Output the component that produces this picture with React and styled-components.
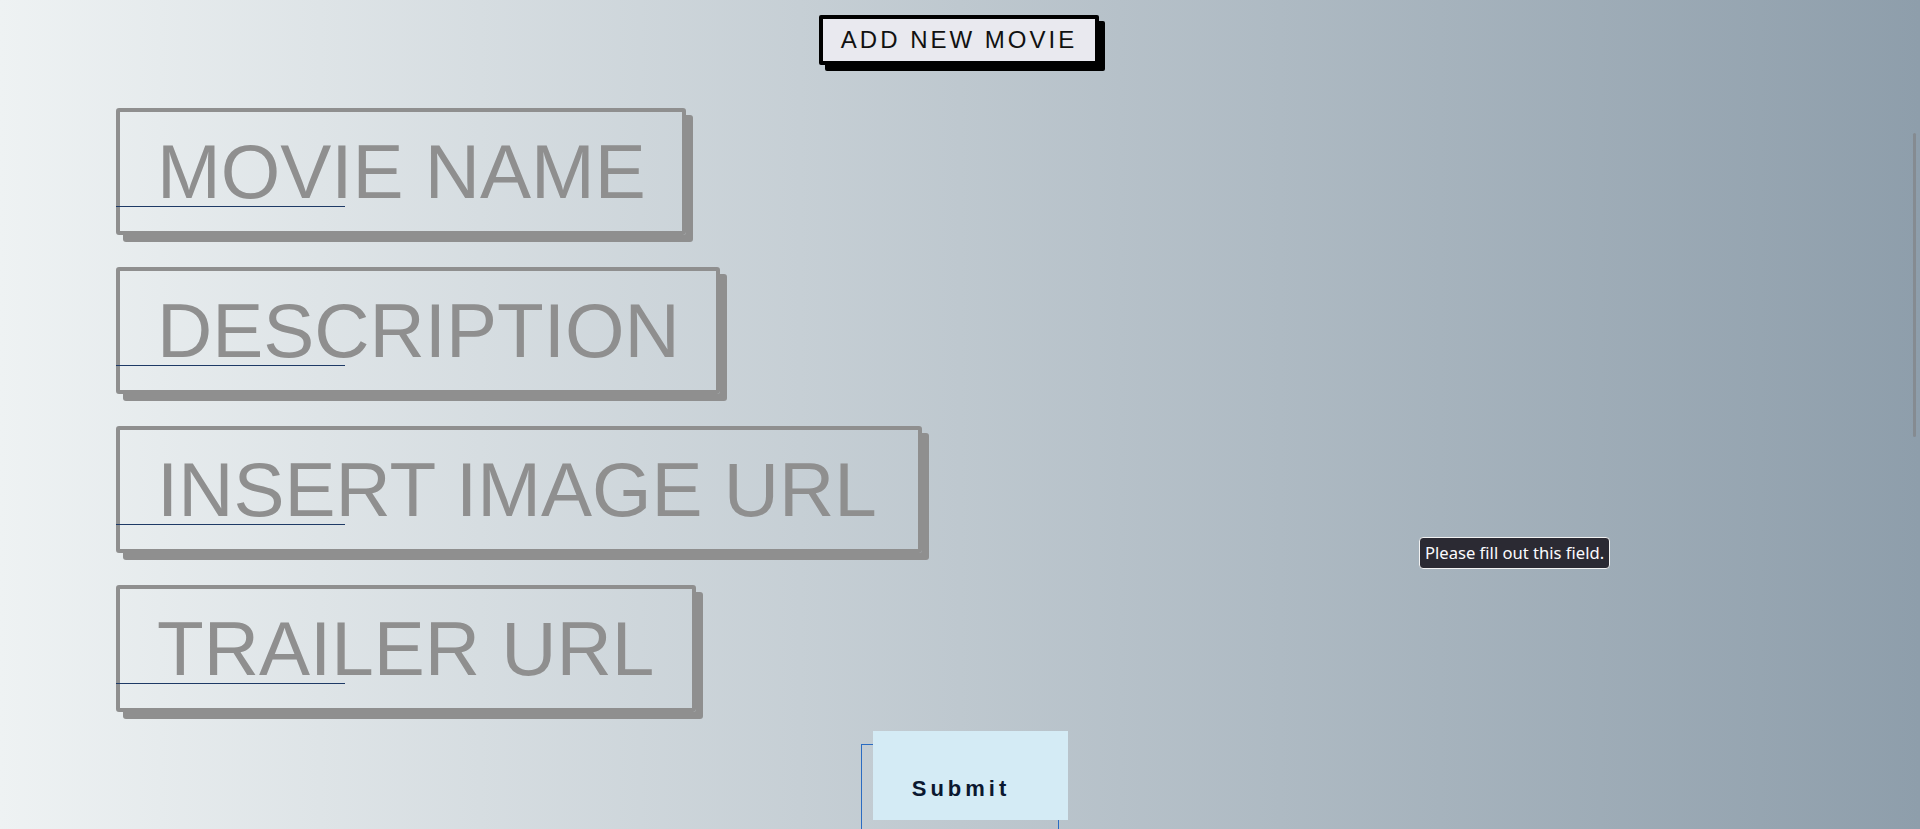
import React from "react";
import styled, { createGlobalStyle } from "styled-components";

const fields = [
  { name: "name", placeholder: "MOVIE NAME", width: 570 },
  { name: "description", placeholder: "DESCRIPTION", width: 604 },
  { name: "image", placeholder: "INSERT IMAGE URL", width: 806 },
  { name: "trailer", placeholder: "TRAILER URL", width: 580 },
];

export default function App() {
  const submitHandler = (e) => {
    e.preventDefault();
  };

  return (
    <>
      <GlobalStyle />
      <PageDiv>
        <HeaderBox>
          <TitleH1>ADD NEW MOVIE</TitleH1>
        </HeaderBox>
        <MovieForm onSubmit={submitHandler}>
          {fields.map((f) => (
            <FieldBox key={f.name}>
              <MovieInput name={f.name} placeholder={f.placeholder} $w={f.width} required />
              <FocusLine />
            </FieldBox>
          ))}
          <SubmitButton type='submit'>Submit</SubmitButton>
        </MovieForm>
        <ValidationTip>Please fill out this field.</ValidationTip>
        <ScrollThumb />
      </PageDiv>
    </>
  );
}

const GlobalStyle = createGlobalStyle`
  html, body {
    margin: 0;
    padding: 0;
  }
  body {
    background: linear-gradient(to right, #eef2f3, #8e9eab);
    font-family: "Liberation Sans", Arial, sans-serif;
  }
  * {
    box-sizing: border-box;
  }
`;

const PageDiv = styled.div`
  position: relative;
  width: 100%;
  height: 100vh;
  overflow: hidden;
  padding-top: 15px;
  display: flex;
  flex-direction: column;
`;

const HeaderBox = styled.div`
  display: flex;
  justify-content: center;
  padding-right: 2px;
`;

const TitleH1 = styled.h1`
  margin: 0;
  height: 50px;
  padding: 7px 18px 7px 18px;
  border: 4px solid #000;
  border-radius: 2px;
  box-shadow: 6px 6px 0 #000;
  background: #e9e9ef;
  color: #111;
  font-size: 24px;
  font-weight: 400;
  line-height: 28px;
  letter-spacing: 3px;
`;

const MovieForm = styled.form`
  margin-top: 43px;
  padding-left: 116px;
  display: flex;
  flex-direction: column;
  gap: 32px;
`;

const FieldBox = styled.div`
  position: relative;
  align-self: flex-start;
`;

const MovieInput = styled.input`
  display: block;
  width: ${(p) => p.$w}px;
  height: 127px;
  padding: 0 0 0 37px;
  border: 4px solid #8f8f8f;
  border-radius: 3px;
  box-shadow: 7px 7px 0 #8f8f8f;
  background: transparent;
  font-family: "Liberation Sans", Arial, sans-serif;
  font-size: 76.5px;
  color: #333;
  outline: none;

  &::placeholder {
    color: #8f8f8f;
    opacity: 1;
  }
`;

const FocusLine = styled.span`
  position: absolute;
  left: 0;
  top: 98px;
  width: 229px;
  height: 1px;
  background: #1e3a66;
`;

const SubmitButton = styled.button`
  position: relative;
  z-index: 0;
  align-self: center;
  margin-left: -116px;
  width: 198px;
  height: 89px;
  padding: 0 0 0 2px;
  border: 1px solid #2a6cc2;
  background: transparent;
  color: #0b1830;
  font-family: "Liberation Sans", Arial, sans-serif;
  font-size: 22px;
  font-weight: 700;
  letter-spacing: 4px;
  cursor: pointer;

  &::before {
    content: "";
    position: absolute;
    z-index: -1;
    top: -14px;
    left: 11px;
    width: 195px;
    height: 89px;
    background: #d4ebf5;
  }
`;

const ValidationTip = styled.div`
  position: absolute;
  left: 1419px;
  top: 537px;
  padding: 4px 5px 4px 5px;
  border: 1px solid #f2f2f2;
  border-radius: 4px;
  background: #2b2a33;
  color: #fbfbfe;
  font-family: "Noto Sans", "Open Sans", sans-serif;
  font-size: 16.6px;
  line-height: 22px;
  white-space: nowrap;
`;

const ScrollThumb = styled.div`
  position: absolute;
  right: 4px;
  top: 133px;
  width: 3px;
  height: 304px;
  border-radius: 2px;
  background: #858b91;
`;
